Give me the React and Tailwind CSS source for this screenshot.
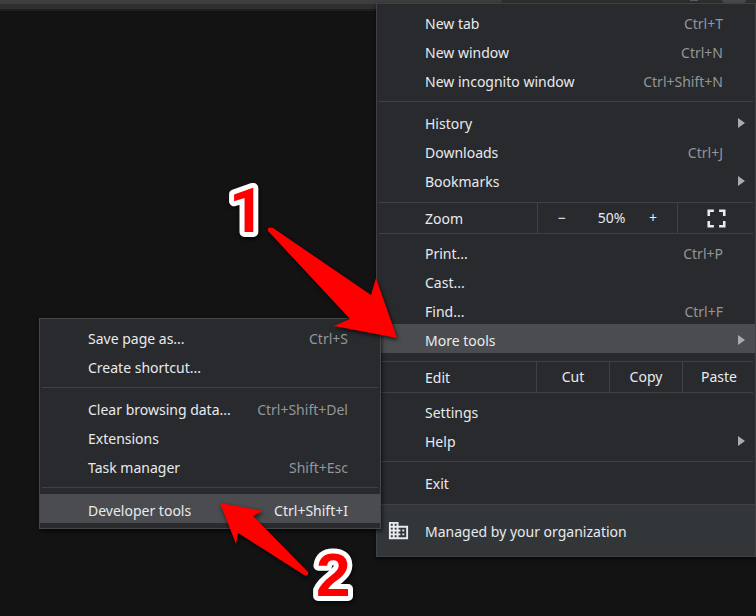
import { MdDomain, MdFullscreen } from "react-icons/md";

const newItems = [
  { label: "New tab", keys: "Ctrl+T" },
  { label: "New window", keys: "Ctrl+N" },
  { label: "New incognito window", keys: "Ctrl+Shift+N" },
];

const browseItems = [
  { label: "History", sub: true },
  { label: "Downloads", keys: "Ctrl+J" },
  { label: "Bookmarks", sub: true },
];

const pageItems = [
  { label: "Print...", keys: "Ctrl+P" },
  { label: "Cast..." },
  { label: "Find...", keys: "Ctrl+F" },
];

const saveItems = [
  { label: "Save page as...", keys: "Ctrl+S" },
  { label: "Create shortcut..." },
];

const dataItems = [
  { label: "Clear browsing data...", keys: "Ctrl+Shift+Del" },
  { label: "Extensions" },
  { label: "Task manager", keys: "Shift+Esc" },
];

function Item({ label, keys, sub, active, activeKeys }) {
  return (
    <button
      type="button"
      className={`flex h-[29px] w-full items-center pl-12 text-left ${
        active ? "bg-[#4b4c4f]" : "hover:bg-[#4b4c4f]"
      }`}
    >
      <span className="flex-1 pt-1">{label}</span>
      {keys && (
        <span className={`pt-1 pr-8 ${activeKeys ? "" : "text-[#93969a]"}`}>{keys}</span>
      )}
      {sub && (
        <svg viewBox="0 0 7 10" className="mt-0.5 mr-2.5 h-2.5 w-[7px] fill-[#a9abae]">
          <path d="M0 0 L7 5 L0 10 Z" />
        </svg>
      )}
    </button>
  );
}

function Divider() {
  return <hr className="mx-0.5 border-t border-[#3f4145]" />;
}

function MoreToolsMenu() {
  return (
    <div className="absolute -top-1.5 right-full z-10 -mr-1 w-[342px] border border-[#45474a] bg-[#292a2d] shadow-[1px_2px_4px_rgba(0,0,0,0.7)]">
      <div className="pt-[3px] pb-[7px]">
        {saveItems.map((item) => (
          <Item key={item.label} {...item} />
        ))}
      </div>
      <Divider />
      <div className="pt-[5px] pb-[7px]">
        {dataItems.map((item) => (
          <Item key={item.label} {...item} />
        ))}
      </div>
      <Divider />
      <div className="pt-1.5 pb-[5px]">
        <Item label="Developer tools" keys="Ctrl+Shift+I" active activeKeys />
      </div>
    </div>
  );
}

function ZoomRow() {
  return (
    <div className="flex h-[30px] items-stretch">
      <span className="flex flex-1 items-center pl-12 pt-0.5">Zoom</span>
      <div className="flex w-[140px] items-center border-l border-[#3f4145]">
        <button type="button" aria-label="Zoom out" className="w-12 text-center">−</button>
        <span className="flex-1 pl-2 text-center">50%</span>
        <button type="button" aria-label="Zoom in" className="w-12 text-center">+</button>
      </div>
      <button
        type="button"
        aria-label="Full screen"
        className="flex w-[78px] items-center justify-center border-l border-[#3f4145]"
      >
        <MdFullscreen size={31} />
      </button>
    </div>
  );
}

function EditRow() {
  return (
    <div className="flex h-[30px] items-stretch">
      <span className="flex flex-1 items-center pl-12 pt-0.5">Edit</span>
      {["Cut", "Copy", "Paste"].map((name) => (
        <button key={name} type="button" className="w-[73px] border-l border-[#3f4145]">
          {name}
        </button>
      ))}
    </div>
  );
}

// Numbered arrows pointing at the two steps
function StepOne() {
  return (
    <svg
      viewBox="220 175 190 175"
      className="pointer-events-none absolute top-[172px] right-[346px] z-20 h-[175px] w-[190px] overflow-visible drop-shadow-[1px_2px_2px_rgba(0,0,0,0.7)]"
    >
      <path
        d="M273 228 L371 295 L376 278 L397 338 L334 326 L350 319 L268 231 Q267 226 273 228 Z"
        fill="#ff0000"
      />
      <text
        x="229"
        y="232"
        fontSize="62"
        fontWeight="700"
        fontFamily="Roboto, Arial, sans-serif"
        fill="#ff0000"
        stroke="#ffffff"
        strokeWidth="10"
        strokeLinejoin="round"
        paintOrder="stroke"
      >
        1
      </text>
    </svg>
  );
}

function StepTwo() {
  return (
    <svg
      viewBox="210 495 150 115"
      className="pointer-events-none absolute top-[492px] right-[396px] z-20 h-[115px] w-[150px] overflow-visible drop-shadow-[1px_2px_2px_rgba(0,0,0,0.7)]"
    >
      <path
        d="M220 503 L263 511 L253 516 L308 572 Q309 577 304 575 L238 533 L236 544 Z"
        fill="#ff0000"
      />
      <text
        x="316"
        y="596"
        fontSize="62"
        fontWeight="700"
        fontFamily="Liberation Sans, Arial, sans-serif"
        fill="#ff0000"
        stroke="#ffffff"
        strokeWidth="10"
        strokeLinejoin="round"
        paintOrder="stroke"
      >
        2
      </text>
    </svg>
  );
}

export default function App() {
  return (
    <div className="min-h-screen overflow-hidden bg-[#131313] font-['Noto_Sans','Open_Sans',sans-serif] text-sm text-[#e8eaed]">
      <header className="flex h-[11px] justify-end gap-6 overflow-hidden border-b-2 border-[#1f1f1f] bg-[#2f2f2f] pr-2.5">
        <div className="h-1 flex-1 rounded-br-full bg-[#3e3e3e]" />
        <div className="h-1 w-[140px]" />
        <div className="h-px w-2 bg-[#5a5b5c]" />
        <div className="h-[3px] w-6 rounded-b-full bg-[#48494a]" />
      </header>

      <main className="relative -mt-2 flex justify-end">
        <nav className="w-[380px] border border-[#3f4145] bg-[#292a2d] shadow-[0_2px_4px_rgba(0,0,0,0.6)]">
          <div className="pt-[3px] pb-[7px]">
            {newItems.map((item) => (
              <Item key={item.label} {...item} />
            ))}
          </div>
          <Divider />
          <div className="pt-[5px] pb-2">
            {browseItems.map((item) => (
              <Item key={item.label} {...item} />
            ))}
          </div>
          <Divider />
          <ZoomRow />
          <Divider />
          <div className="pt-[3px] pb-2">
            {pageItems.map((item) => (
              <Item key={item.label} {...item} />
            ))}
            <div className="relative">
              <Item label="More tools" sub active />
              <MoreToolsMenu />
            </div>
          </div>
          <Divider />
          <EditRow />
          <Divider />
          <div className="pt-[3px] pb-[7px]">
            <Item label="Settings" />
            <Item label="Help" sub />
          </div>
          <Divider />
          <div className="pt-[5px] pb-2">
            <Item label="Exit" />
          </div>
          <button
            type="button"
            className="flex h-[52px] w-full items-center border-t border-[#3f4145] bg-[#323639] pl-2.5 text-left"
          >
            <MdDomain size={23} />
            <span className="pt-0.5 pl-[15px]">Managed by your organization</span>
          </button>
        </nav>
        <StepOne />
        <StepTwo />
      </main>
    </div>
  );
}
